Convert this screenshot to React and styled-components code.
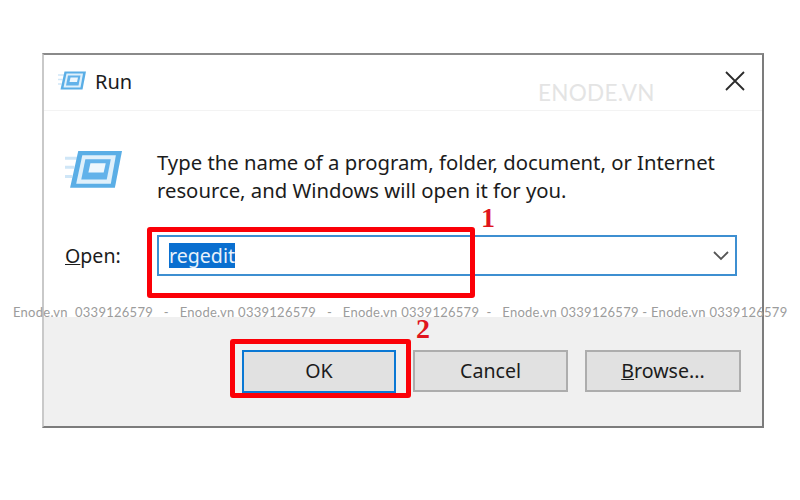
import React from "react";
import styled, { createGlobalStyle } from "styled-components";

const GlobalStyle = createGlobalStyle`
  html, body {
    margin: 0;
    padding: 0;
    background: #ffffff;
  }
`;

const Page = styled.div`
  position: relative;
  width: 800px;
  height: 500px;
  padding: 53px 0 0 42px;
  box-sizing: border-box;
  overflow: hidden;
  background: #ffffff;
  font-family: "Noto Sans", "Open Sans", sans-serif;
  color: #1c1c1c;
`;

const Dialog = styled.div`
  position: relative;
  width: 722px;
  height: 375px;
  box-sizing: border-box;
  display: flex;
  flex-direction: column;
  background: #ffffff;
  border-top: 2px solid #8a8a8a;
  border-right: 2px solid #7c7c7c;
  border-bottom: 2px solid #7c7c7c;
  border-left: 2px solid #c9c9c9;
`;

const TitleBar = styled.div`
  height: 56px;
  flex: none;
  box-sizing: border-box;
  display: flex;
  align-items: center;
  padding: 0 17px 3px 14px;
  border-bottom: 1px solid #f3f3f3;
`;

const TitleText = styled.span`
  margin: 1px 0 0 9px;
  font-size: 20px;
  line-height: 26px;
`;

const CloseButton = styled.span`
  margin-left: auto;
  display: flex;
  color: #2b2b2b;
`;

const Content = styled.div`
  flex: 1;
  display: flex;
  flex-direction: column;
  padding: 37px 25px 0 21px;
`;

const Intro = styled.div`
  display: flex;
  align-items: flex-start;
`;

const IconImage = styled.svg`
  flex: none;
  margin-top: ${(p) => p.$offset}px;
  filter: blur(0.5px);
`;

const Message = styled.p`
  margin: 0 0 0 35px;
  font-size: 20.3px;
  line-height: 28px;
  white-space: nowrap;
`;

const OpenRow = styled.div`
  display: flex;
  align-items: center;
  margin-top: 31px;
`;

const OpenLabel = styled.span`
  width: 92px;
  flex: none;
  font-size: 19.6px;
  line-height: 26px;
`;

const Field = styled.div`
  flex: 1;
  height: 41px;
  box-sizing: border-box;
  display: flex;
  align-items: center;
  padding: 0 6px 0 10px;
  border: 2px solid #3d8fd1;
  background: #ffffff;
`;

const Selected = styled.span`
  background: #0a6fd0;
  color: #e8f2fb;
  font-size: 19.6px;
  line-height: 25px;
`;

const Chevron = styled.span`
  margin-left: auto;
  display: flex;
  color: #555555;
`;

const Footer = styled.div`
  height: 109px;
  flex: none;
  box-sizing: border-box;
  display: flex;
  justify-content: flex-end;
  gap: 17px;
  padding: 33px 21px 0 0;
  background: #f0f0f0;
`;

const Button = styled.div`
  width: ${(p) => p.$width}px;
  height: ${(p) => (p.$primary ? 43 : 42)}px;
  box-sizing: border-box;
  display: flex;
  align-items: center;
  justify-content: center;
  padding-bottom: 2px;
  background: #e1e1e1;
  border: 2px solid ${(p) => (p.$primary ? "#0a78d4" : "#adadad")};
  font-size: 19.6px;
  color: #1c1c1c;
`;

const Mark = styled.span`
  position: absolute;
  left: ${(p) => p.$left}px;
  top: ${(p) => p.$top}px;
  width: ${(p) => p.$width}px;
  height: ${(p) => p.$height}px;
  box-sizing: border-box;
  border: 5px solid #fb0007;
  border-radius: 3px;
`;

const Step = styled.span`
  position: absolute;
  left: ${(p) => p.$left}px;
  top: ${(p) => p.$top}px;
  font-family: "Liberation Serif", "DejaVu Serif", serif;
  font-weight: 700;
  font-size: 28px;
  line-height: 28px;
  color: #e0141c;
`;

const Brand = styled.span`
  position: absolute;
  left: 538px;
  top: 80px;
  font-family: Lato, "Open Sans", sans-serif;
  font-size: 22.5px;
  line-height: 26px;
  letter-spacing: 0.3px;
  color: #e4e4e4;
`;

const Strip = styled.div`
  position: absolute;
  left: 13px;
  top: 304px;
  display: flex;
  white-space: pre;
  font-family: Lato, "Open Sans", sans-serif;
  font-size: 13px;
  line-height: 17px;
  letter-spacing: 0.265px;
  color: #9c9c9c;
`;

function RunIcon({ size, offset = 0 }) {
  const h = size * 0.68;
  return (
    <IconImage width={size} height={h} $offset={offset} viewBox="0 0 56 38" fill="none">
      <path d="M0 8h12M0 17h9M0 26h7" stroke="#cfe6f7" strokeWidth="3" />
      <path d="M13 1h43l-7 36H5z" fill="#5aaee6" />
      <path d="M17 5h33l-5 28H11z" fill="#dff0fb" />
      <path d="M20 9h25l-4 20H16z" fill="#62b2ea" />
      <path d="M25 13h15l-2 9H23z" fill="#eef7fd" />
    </IconImage>
  );
}

function Underlined({ children }) {
  return <span style={{ textDecoration: "underline" }}>{children}</span>;
}

export default function App() {
  return (
    <Page>
      <GlobalStyle />
      <Dialog>
        <TitleBar>
          <RunIcon size={28} />
          <TitleText>Run</TitleText>
          <CloseButton>
            <svg width="20" height="20" viewBox="0 0 20 20" fill="none" stroke="currentColor" strokeWidth="1.8">
              <path d="M1 1l18 18M19 1L1 19" />
            </svg>
          </CloseButton>
        </TitleBar>
        <Content>
          <Intro>
            <RunIcon size={57} offset={2} />
            <Message>
              Type the name of a program, folder, document, or Internet
              <br />
              resource, and Windows will open it for you.
            </Message>
          </Intro>
          <OpenRow>
            <OpenLabel>
              <Underlined>O</Underlined>pen:
            </OpenLabel>
            <Field>
              <Selected>regedit</Selected>
              <Chevron>
                <svg width="16" height="10" viewBox="0 0 16 10" fill="none" stroke="currentColor" strokeWidth="1.8">
                  <path d="M1 1l7 7 7-7" />
                </svg>
              </Chevron>
            </Field>
          </OpenRow>
        </Content>
        <Footer>
          <Button $width={154} $primary>OK</Button>
          <Button $width={155}>Cancel</Button>
          <Button $width={156}>
            <span>
              <Underlined>B</Underlined>rowse...
            </span>
          </Button>
        </Footer>
      </Dialog>
      <Brand>ENODE.VN</Brand>
      <Mark $left={147} $top={227} $width={328} $height={71} />
      <Mark $left={230} $top={339} $width={181} $height={59} />
      <Step $left={481} $top={204}>1</Step>
      <Step $left={416} $top={315}>2</Step>
      <Strip>Enode.vn  0339126579   -   Enode.vn 0339126579   -   Enode.vn 0339126579  -   Enode.vn 0339126579 - Enode.vn 0339126579</Strip>
    </Page>
  );
}
